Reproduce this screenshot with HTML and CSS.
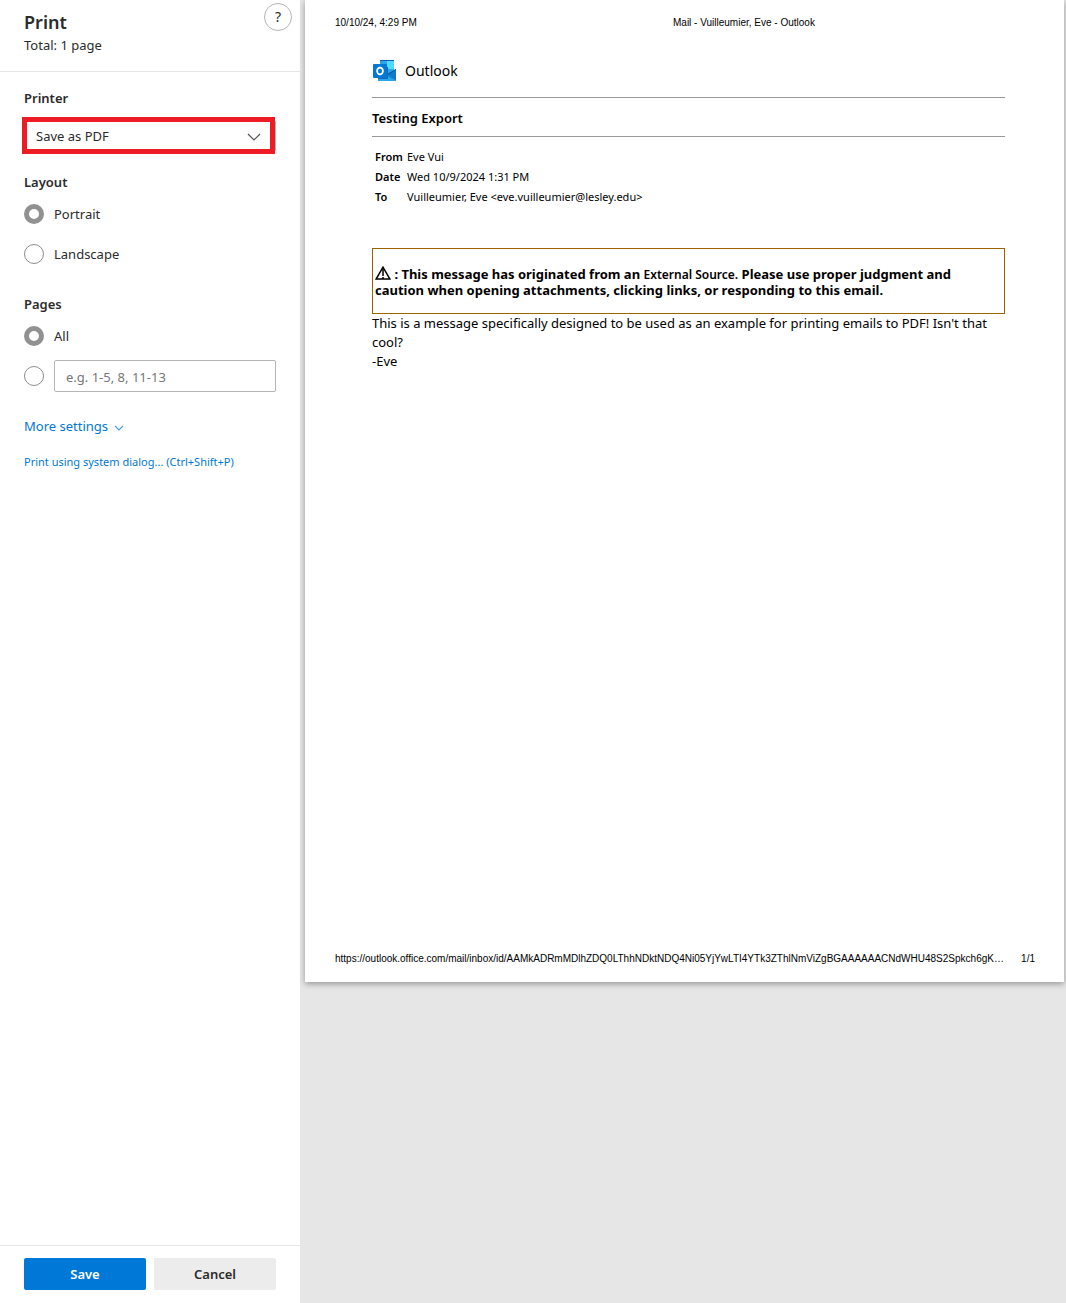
FILE: index.html
```html
<!DOCTYPE html>
<html lang="en">

<head>
    <meta charset="UTF-8">
    <meta name="viewport" content="width=device-width, initial-scale=1.0">
    <title>Print</title>
    <link rel="stylesheet" href="styles.css">
</head>

<body>
    <form class="sidebar">
        <header class="sidebar-header">
            <div>
                <h1>Print</h1>
                <p class="total">Total: 1 page</p>
            </div>
            <button type="button" class="help" aria-label="Help">?</button>
        </header>

        <div class="settings">
            <label class="heading" for="printer">Printer</label>
            <div class="select-wrap">
                <select id="printer">
                    <option>Save as PDF</option>
                </select>
                <svg class="select-arrow" viewBox="0 0 14 8" fill="none" stroke="#555" stroke-width="1.2">
                    <path d="M1 1l6 6 6-6" />
                </svg>
                <span class="highlight"></span>
            </div>

            <fieldset>
                <legend class="heading">Layout</legend>
                <label class="option"><input type="radio" name="layout" checked> Portrait</label>
                <label class="option"><input type="radio" name="layout"> Landscape</label>
            </fieldset>

            <fieldset>
                <legend class="heading">Pages</legend>
                <label class="option"><input type="radio" name="pages" checked> All</label>
                <div class="option">
                    <input type="radio" name="pages" aria-label="Custom pages">
                    <input type="text" class="range" placeholder="e.g. 1-5, 8, 11-13" aria-label="Page range">
                </div>
            </fieldset>

            <a href="#" class="more">More settings
                <svg viewBox="0 0 10 6" fill="none" stroke="#4a9fe0" stroke-width="1.2">
                    <path d="M1 1l4 4 4-4" />
                </svg>
            </a>
            <a href="#" class="system-dialog">Print using system dialog... (Ctrl+Shift+P)</a>
        </div>

        <footer class="actions">
            <button type="submit" class="save">Save</button>
            <button type="button" class="cancel">Cancel</button>
        </footer>
    </form>

    <main class="preview">
        <article class="sheet">
            <div class="sheet-header">
                <span>10/10/24, 4:29 PM</span>
                <span class="sheet-title">Mail - Vuilleumier, Eve - Outlook</span>
            </div>

            <div class="mail">
                <div class="brand">
                    <svg viewBox="0 0 24 24">
                        <path fill="#28a8ea" d="M7 1h7v9H7z" />
                        <path fill="#50d9ff" d="M14 1h7v9h-7z" />
                        <path fill="#0f5fb0" d="M7 1h14v1H7z" />
                        <path fill="#28a8ea" d="M14 10h7v5h-7z" />
                        <path fill="#1490df" d="M23 10v11a1 1 0 0 1-1 1H6a1 1 0 0 1-1-1v-5h9z" />
                        <path fill="#28a8ea" d="M5 18h10l8 3.500-1 .5H6a1 1 0 0 1-1-1z" />
                        <path fill="#1279c9" d="M14.500 15.500L23 10v11.500z" />
                        <path fill="#0a5aa8" d="M14 15l9-5v1l-8 5z" />
                        <path fill="#0f6cbd" d="M14 8v11H5v1h10V8z" />
                        <rect fill="#0078d4" x="0" y="5" width="14" height="14" rx="1" />
                        <ellipse cx="7" cy="12" rx="2.900" ry="3.400" fill="none" stroke="#fff" stroke-width="1.800" />
                    </svg>
                    <span>Outlook</span>
                </div>

                <h2>Testing Export</h2>

                <table class="meta">
                    <tr>
                        <th scope="row">From</th>
                        <td>Eve Vui</td>
                    </tr>
                    <tr>
                        <th scope="row">Date</th>
                        <td>Wed 10/9/2024 1:31 PM</td>
                    </tr>
                    <tr>
                        <th scope="row">To</th>
                        <td>Vuilleumier, Eve &lt;eve.vuilleumier@lesley.edu&gt;</td>
                    </tr>
                </table>

                <p class="warning">
                    <svg viewBox="0 0 16 14" fill="none" stroke="#000" stroke-width="1.500">
                        <path d="M8 1.200L1.200 13h13.600z" />
                        <path d="M8 3v7M8 11v2" />
                    </svg>
                    : This message has originated from an <span class="source">External Source.</span> Please use proper judgment and caution when opening attachments, clicking links, or responding to this email.
                </p>

                <p class="message">This is a message specifically designed to be used as an example for printing emails to PDF! Isn't that cool?</p>
                <p class="message">-Eve</p>
            </div>

            <div class="sheet-footer">
                <span>https://outlook.office.com/mail/inbox/id/AAMkADRmMDlhZDQ0LThhNDktNDQ4Ni05YjYwLTI4YTk3ZThlNmViZgBGAAAAAACNdWHU48S2Spkch6gK…</span>
                <span>1/1</span>
            </div>
        </article>
    </main>
</body>

</html>
```
FILE: styles.css
```css
* {
    margin: 0;
    padding: 0;
    box-sizing: border-box;
}

body {
    display: flex;
    min-height: 100vh;
    background-color: #e6e6e6;
    color: #2b2b2b;
    font-family: 'Segoe UI', 'Noto Sans', sans-serif;
    font-size: 13px;
    line-height: 20px;
}

button,
input,
select {
    font: inherit;
    color: inherit;
}

a {
    color: #0078d4;
    text-decoration: none;
}

/* Sidebar */

.sidebar {
    flex: 0 0 300px;
    display: flex;
    flex-direction: column;
    background-color: #fff;
}

.sidebar-header {
    display: flex;
    justify-content: space-between;
    height: 72px;
    padding: 3px 8px 0 24px;
    border-bottom: 1px solid #e6e6e6;
}

h1 {
    margin-top: 7px;
    font-size: 18px;
    font-weight: 600;
    line-height: 24px;
}

.total {
    line-height: 22px;
}

.help {
    width: 28px;
    height: 28px;
    border: 1px solid #b5b5b5;
    border-radius: 50%;
    background: none;
    font-size: 14px;
}

.settings {
    flex: 1;
    padding: 16px 24px;
}

.heading {
    display: block;
    font-weight: 600;
}

.select-wrap {
    position: relative;
    margin: 12px 0 20px;
}

select {
    display: block;
    width: 100%;
    height: 32px;
    padding: 0 11px;
    border: 1px solid #b5b5b5;
    border-radius: 2px;
    background-color: #fff;
    appearance: none;
}

.select-arrow {
    position: absolute;
    top: 13px;
    right: 15px;
    width: 14px;
    height: 8px;
    pointer-events: none;
}

.highlight {
    position: absolute;
    inset: -3px 1px -2px -2px;
    border: 5px solid #ed1c24;
    pointer-events: none;
}

fieldset {
    margin-bottom: 16px;
    border: none;
}

.option {
    display: flex;
    align-items: center;
    gap: 10px;
    height: 32px;
    margin-bottom: 8px;
}

.heading + .option {
    margin-top: 6px;
}

input[type="radio"] {
    flex: none;
    width: 20px;
    height: 20px;
    border: 1px solid #8c8c8c;
    border-radius: 50%;
    appearance: none;
}

input[type="radio"]:checked {
    border: 5px solid #919191;
}

.range {
    flex: 1;
    min-width: 0;
    height: 32px;
    padding: 2px 11px 0;
    border: 1px solid #b5b5b5;
    border-radius: 2px;
}

.range::placeholder {
    color: #767676;
}

.more {
    display: block;
    margin-bottom: 16px;
}

.more svg {
    width: 10px;
    height: 6px;
    margin-left: 3px;
}

.system-dialog {
    display: block;
    font-size: 11px;
}

.actions {
    display: flex;
    gap: 8px;
    padding: 12px 24px 13px;
    border-top: 1px solid #e6e6e6;
}

.actions button {
    flex: 1;
    height: 32px;
    border: none;
    border-radius: 2px;
    font-weight: 600;
}

.save {
    background-color: #0078d7;
    color: #fff;
}

.cancel {
    background-color: #ececec;
}

/* Page preview */

.preview {
    flex: 1;
    min-width: 0;
    padding: 0 2px 0 5px;
}

.sheet {
    display: flex;
    flex-direction: column;
    aspect-ratio: 17 / 22;
    padding: 15px 29px 15px 30px;
    background-color: #fff;
    box-shadow: 0 2px 6px rgba(0, 0, 0, 0.35);
    color: #000;
}

.sheet-header,
.sheet-footer {
    font-family: Arial, 'Liberation Sans', sans-serif;
    font-size: 10px;
    line-height: 16px;
}

.sheet-header {
    display: grid;
    grid-template-columns: 1fr 4fr;
}

.sheet-title {
    padding-left: 198px;
}

.sheet-footer {
    display: flex;
    justify-content: space-between;
}

.mail {
    flex: 1;
    padding: 28px 30px 0 37px;
}

.brand {
    display: flex;
    align-items: center;
    gap: 8px;
    height: 24px;
    padding-left: 1px;
    font-size: 14px;
}

.brand svg {
    width: 24px;
    height: 24px;
}

h2 {
    margin-top: 14px;
    padding: 10px 0 8px;
    border: solid #999;
    border-width: 1px 0;
    font-size: 13px;
    font-weight: 600;
}

.meta {
    margin-top: 10px;
    border-collapse: collapse;
    font-size: 11px;
    text-align: left;
}

.meta th {
    min-width: 35px;
    padding: 0 3px;
    font-weight: 600;
}

.warning {
    margin-top: 41px;
    padding: 17px 2px 15px;
    border: 1px solid #9c6500;
    font-size: 13px;
    font-weight: 700;
    line-height: 16px;
}

.warning svg {
    width: 16px;
    height: 14px;
    vertical-align: -1px;
}

.source {
    font-size: 12px;
    font-weight: 600;
    line-height: 12px;
}

.message {
    font-size: 13px;
    line-height: 19px;
}
```
